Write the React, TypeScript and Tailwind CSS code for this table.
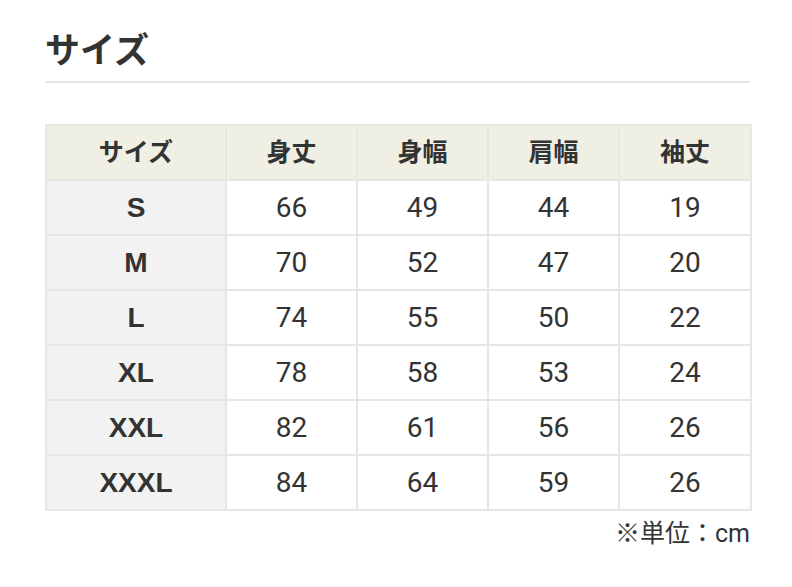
const FONT = 'Roboto, "Noto Sans CJK JP", sans-serif';
const ARIAL = '"Liberation Sans", Arial, "Noto Sans CJK JP", sans-serif';

const HEAD = ['サイズ', '身丈', '身幅', '肩幅', '袖丈'];

const ROWS: [string, number, number, number, number][] = [
  ['S', 66, 49, 44, 19],
  ['M', 70, 52, 47, 20],
  ['L', 74, 55, 50, 22],
  ['XL', 78, 58, 53, 24],
  ['XXL', 82, 61, 56, 26],
  ['XXXL', 84, 64, 59, 26],
];

export default function App() {
  return (
    <div className="min-h-screen bg-white text-[#333] pt-[26px] pl-[45px] pr-[42px]" style={{ fontFamily: FONT }}>
      <h2 className="text-[35px] font-bold leading-[52px] pb-[3px] border-b-2 border-[#e6e6e6]">
        サイズ
      </h2>

      <table className="mt-[41px] w-[705px] border-collapse table-fixed">
        <colgroup>
          <col className="w-[180px]" />
          <col className="w-[131px]" />
          <col className="w-[131px]" />
          <col className="w-[131px]" />
          <col className="w-[132px]" />
        </colgroup>
        <thead>
          <tr className="h-[55px] bg-[#f0efe4]">
            {HEAD.map((h) => (
              <th key={h} className="border-2 border-[#e6e6e6] text-[25px] font-bold text-center">
                {h}
              </th>
            ))}
          </tr>
        </thead>
        <tbody>
          {ROWS.map(([size, ...vals]) => (
            <tr key={size} className="h-[55px]">
              <td
                className="border-2 border-[#e6e6e6] bg-[#f2f2f2] text-[28px] font-bold text-center"
                style={{ fontFamily: ARIAL }}
              >
                {size}
              </td>
              {vals.map((v, i) => (
                <td key={i} className="border-2 border-[#e6e6e6] text-[28px] text-center">
                  {v}
                </td>
              ))}
            </tr>
          ))}
        </tbody>
      </table>

      <p className="w-[705px] text-right text-[25px] mt-[3px] leading-[40px]">※単位：cm</p>
    </div>
  );
}
